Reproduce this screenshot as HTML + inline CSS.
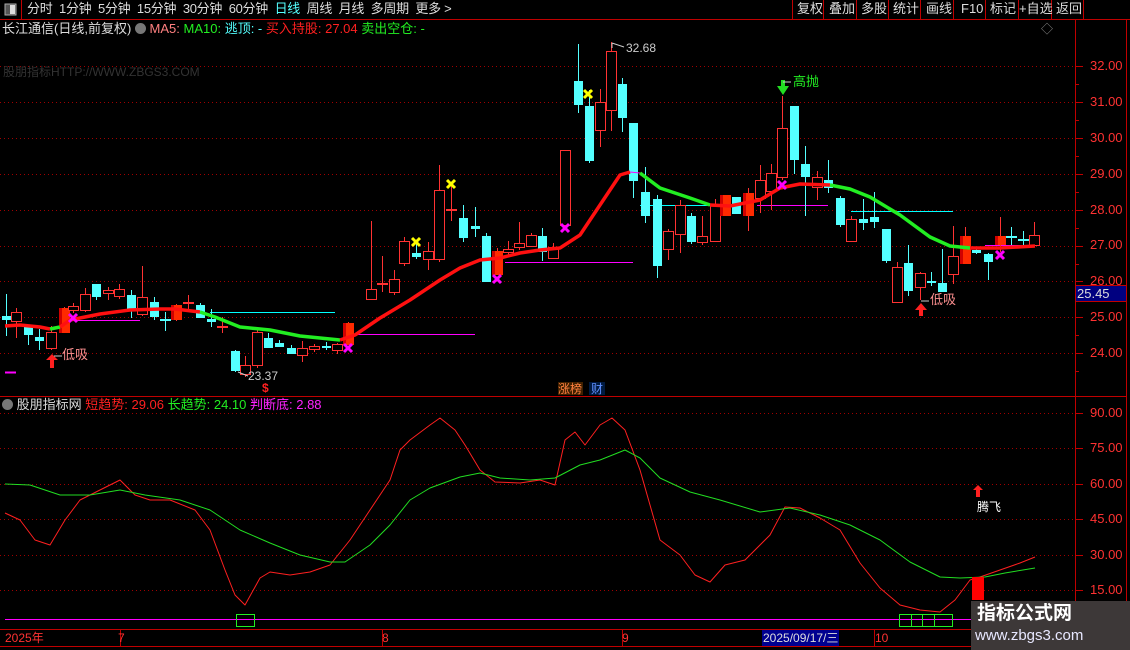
<!DOCTYPE html>
<html><head><meta charset="utf-8"><style>
html,body{margin:0;padding:0;background:#000;width:1130px;height:650px;overflow:hidden;font-family:"Liberation Sans","Noto Sans CJK SC",sans-serif}
.t{position:absolute;white-space:nowrap;font-size:12px;line-height:14px}
</style></head><body>
<svg id="s" width="1130" height="650" style="position:absolute;left:0;top:0" xmlns="http://www.w3.org/2000/svg">
<g id="grid"></g><g id="c"></g><g id="ind"></g>
</svg>
<div id="txt"></div>
<script>
var NS="http://www.w3.org/2000/svg",S=document.getElementById('s');
function el(n,a,p){var e=document.createElementNS(NS,n);for(var k in a)e.setAttribute(k,a[k]);(p||S).appendChild(e);return e}
function line(x1,y1,x2,y2,c,w,d){var a={x1:x1,y1:y1,x2:x2,y2:y2,stroke:c,'stroke-width':w||1};if(d)a['stroke-dasharray']=d;return el('line',a)}
function rect(x,y,w,h,f,s){return el('rect',{x:x,y:y,width:w,height:h,fill:f||'none',stroke:s||'none'})}
function poly(pts,c,w){return el('polyline',{points:pts.map(function(p){return p.join(',')}).join(' '),fill:'none',stroke:c,'stroke-width':w||1,'stroke-linejoin':'round'})}
var R='#c00000';
line(0,19.5,1130,19.5,R);line(21.5,0,21.5,19,R);
rect(5,4,11,11,'#555','#aaa');rect(10,5,5,9,'#ddd');
[792,823,856,888,920,953,985,1018,1051,1083].forEach(function(x){line(x+.5,0,x+.5,19,R)});
line(1075.5,20,1075.5,650,R);line(1126.5,20,1126.5,650,R);
line(0,396.5,1126,396.5,R);line(0,629.5,1126,629.5,R);line(0,646.5,1126,646.5,R);
[120,382,622,874].forEach(function(x){line(x+.5,630,x+.5,646,R)});
for(var p=24;p<=32;p++){var y=Math.round(66+(32-p)*35.9)+.5;line(0,y,1075,y,'#a00000',1,'1 3');line(1075,y,1083,y,R);line(1075,y+18,1079,y+18,R)}
[413,448,484,519,555,590].forEach(function(y){line(0,y+.5,1075,y+.5,'#a00000',1,'1 3');line(1075,y+.5,1083,y+.5,R)});
[[70,140,320,'#ff00ff'],[210,335,312,'#00ffff'],[355,475,334,'#ff00ff'],[505,633,262,'#ff00ff'],[640,713,205,'#00ffff'],[757,828,205,'#ff00ff'],[851,953,211,'#00ffff'],[985,1030,245,'#ff00ff'],[5,16,372,'#ff00ff']].forEach(function(h){line(h[0],h[2]+.5,h[1],h[2]+.5,h[3],h[3]=='#ff00ff'&&h[0]==5?2:1)});
var C=[[6,316,320,294,336,'c'],[16,312,322,308,338,'h'],[28,325,335,325,345,'c'],[39,337,341,329,350,'c'],[51,332,349,326,350,'h'],[64,308,333,307,333,'f'],[73,306,311,303,313,'h'],[85,294,311,288,312,'h'],[96,284,297,284,300,'c'],[108,290,294,287,300,'h'],[119,289,297,284,299,'h'],[131,295,310,290,318,'c'],[142,297,315,266,316,'h'],[154,302,317,297,320,'c'],[165,319,321,312,331,'cx'],[176,305,320,304,321,'f'],[188,302,304,295,311,'x'],[200,305,318,303,318,'c'],[211,319,322,309,327,'c'],[222,326,328,317,333,'x'],[235,351,371,350,372,'c'],[245,365,375,356,377,'h'],[257,332,366,330,368,'h'],[268,338,348,333,348,'c'],[279,343,347,340,347,'c'],[291,348,354,345,354,'c'],[302,348,356,341,362,'h'],[314,346,350,344,352,'h'],[326,346,348,342,350,'c'],[337,344,351,343,354,'h'],[348,323,345,322,345,'f'],
[371,289,300,221,300,'h'],[382,283,285,256,292,'h'],[394,279,293,270,295,'h'],[404,241,264,237,266,'h'],[416,253,257,242,259,'c'],[428,251,260,242,270,'h'],[439,190,260,165,262,'h'],[451,209,211,183,221,'x'],[463,218,238,205,242,'c'],[475,226,229,207,237,'c'],[486,236,282,233,282,'c'],[497,251,275,248,275,'f'],[508,249,253,241,257,'h'],[519,243,248,222,250,'h'],[531,235,247,233,247,'h'],[542,236,252,228,261,'c'],[553,247,259,243,259,'h'],[565,150,226,150,226,'h'],[578,81,105,44,113,'c'],[589,106,161,90,163,'c'],[600,102,131,89,147,'h'],[611,51,111,42,131,'h'],[622,84,118,78,132,'c'],[633,123,181,123,198,'c'],[645,192,216,167,223,'c'],[657,199,266,195,278,'c'],[668,231,250,229,260,'h'],
[680,205,235,200,253,'h'],[691,216,242,213,244,'c'],[702,236,243,216,245,'h'],[715,205,242,199,242,'h'],[725,195,216,195,216,'f'],[736,197,214,197,214,'c'],[748,193,216,188,231,'f'],[760,180,199,165,213,'h'],[771,173,192,164,210,'h'],[782,128,178,96,180,'h'],[794,106,160,106,174,'c'],[805,164,177,146,216,'c'],[817,177,188,171,200,'h'],[828,180,188,160,193,'c'],[840,198,225,196,227,'c'],[851,219,242,216,242,'h'],[863,219,223,199,230,'c'],[874,217,222,192,228,'c'],[886,229,261,229,263,'c'],[897,267,303,262,303,'h'],[908,263,291,245,296,'c'],[920,273,288,272,300,'h'],[931,281,283,272,286,'c'],[942,283,292,249,292,'c'],[953,256,275,226,284,'h'],[965,236,264,227,264,'f'],[976,250,253,248,254,'c'],[988,254,262,253,280,'c'],[1000,236,245,217,252,'f'],[1011,236,238,227,245,'cx'],[1023,239,241,231,245,'cx'],[1034,235,246,222,247,'h']];
C.forEach(function(k){var x=k[0],t=k[5];var col=(t=='c'||t=='cx')?'#54ffff':'#ff3232';
 line(x+.5,k[3],x+.5,k[4],col,1);
 if(t=='c')rect(x-4,k[1],9,Math.max(2,k[2]-k[1]),'#54ffff');
 else if(t=='cx'||t=='x')rect(x-5,k[1],11,2,col);
 else if(t=='f'){rect(x-5,k[1],11,k[2]-k[1],'#ff2a00');rect(x-5,k[1],3,k[2]-k[1],'#d00000')}
 else {rect(x-5,k[1],11,k[2]-k[1],'#000');rect(x-4.5,k[1]+.5,10,k[2]-k[1]-1,'none','#ff3232')}
});
var ma=[[5,326],[20,325],[40,327],[50,329],[60,327],[70,320],[100,314],[130,310],[160,309],[175,309],[200,312],[215,317],[240,327],[270,330],[300,336],[340,340],[355,335],[380,318],[410,300],[440,280],[460,268],[480,260],[500,258],[520,253],[540,250],[560,248],[580,235],[600,205],[620,175],[630,172],[640,173],[660,188],[690,198],[710,205],[730,206],[760,200],[780,188],[800,184],[830,185],[850,189],[870,197],[900,215],[930,237],[950,246],[970,248],[1000,248],[1035,246]];
function seg(a,b,c){poly(ma.filter(function(p){return p[0]>=a&&p[0]<=b}),c,3.5)}
seg(5,50,'#ff1010');seg(50,60,'#22ee22');seg(60,200,'#ff1010');seg(200,340,'#22ee22');seg(340,630,'#ff1010');seg(640,710,'#22ee22');seg(710,830,'#ff1010');seg(830,970,'#22ee22');seg(970,1035,'#ff1010');
poly(ma.filter(function(p){return p[0]>=630&&p[0]<=640}),'#ff00ff',1);
function X(x,y,c){line(x-4,y-4,x+4,y+4,c,3);line(x-4,y+4,x+4,y-4,c,3)}
X(73,318,'#ff00ff');X(348,348,'#ff00ff');X(497,279,'#ff00ff');X(565,228,'#ff00ff');X(782,185,'#ff00ff');X(1000,255,'#ff00ff');
X(416,242,'#ffff00');X(451,184,'#ffff00');X(588,94,'#ffff00');
el('polygon',{points:'46,360 52,354 58,360 54,360 54,368 50,368 50,360',fill:'#ff2020'});
el('polygon',{points:'915,310 921,303 927,310 923,310 923,316 919,316 919,310',fill:'#ff2020'});
el('polygon',{points:'777,86 783,95 789,86 785,86 785,80 781,80 781,86',fill:'#22dd22'});
el('polygon',{points:'973,490 978,485 983,490 980,490 980,497 976,497 976,490',fill:'#ff2020'});
line(54,356,62,356,'#ccc');line(921,301,929,301,'#ccc');line(783,82,791,82,'#ccc');
line(612,43,612,48,'#ccc');line(612,43,624,47,'#ccc');line(238,372,248,376,'#ccc');
var red=[[5,513],[20,520],[35,540],[50,545],[65,520],[80,500],[100,490],[120,480],[135,495],[150,500],[170,500],[195,510],[210,530],[225,570],[235,595],[245,605],[260,578],[270,572],[290,575],[310,572],[330,565],[350,540],[370,510],[390,480],[400,450],[410,440],[430,425],[440,418],[455,430],[465,445],[480,470],[495,482],[520,483],[540,480],[555,485],[565,440],[575,432],[585,445],[600,425],[612,418],[625,430],[640,470],[660,540],[680,555],[695,575],[710,582],[725,565],[745,560],[770,535],[785,507],[800,508],[820,518],[840,530],[860,563],[880,588],[900,605],[920,610],[940,612],[955,600],[970,580],[980,577],[1000,570],[1020,563],[1035,557]];
var grn=[[5,484],[30,485],[60,495],[90,495],[120,490],[145,495],[180,500],[210,510],[240,530],[270,543],[300,555],[330,562],[345,562],[370,545],[390,525],[410,500],[430,488],[460,477],[480,473],[500,478],[530,480],[555,478],[580,465],[600,460],[625,450],[640,458],[660,478],[690,492],[720,500],[760,512],[790,508],[820,515],[850,525],[880,540],[910,562],[940,577],[960,578],[985,577],[1005,573],[1035,568]];
poly(red,'#ff2020',1);poly(grn,'#22dd22',1);
line(5,619.5,1075,619.5,'#ff00ff',1);
rect(236.5,614.5,18,12,'none','#22ee22');
rect(899.5,614.5,53,12,'none','#22ee22');[911,922,934].forEach(function(x){line(x+.5,614,x+.5,627,'#22ee22')});
rect(972,577,12,23,'#ff0000');
rect(1076,286,50,15,'#000080');line(1076,285.5,1126,285.5,R);line(1076,301.5,1126,301.5,R);
rect(762,630,77,16,'#000090');
rect(971,601,159,49,'#3d3838');
rect(558,382,25,13,'#402000');rect(589,382,16,13,'#001a40');
</script>
<div class="t" style="left:27px;top:2px;color:#ddd;font-size:13px;letter-spacing:-0.3px">分时&nbsp;&nbsp;1分钟&nbsp;&nbsp;5分钟&nbsp;&nbsp;15分钟&nbsp;&nbsp;30分钟&nbsp;&nbsp;60分钟&nbsp;&nbsp;<span style="color:#54ffff">日线</span>&nbsp;&nbsp;周线&nbsp;&nbsp;月线&nbsp;&nbsp;多周期&nbsp;&nbsp;更多 &gt;</div>
<div class="t" style="left:797px;top:2px;color:#ddd;font-size:13px">复权</div>
<div class="t" style="left:829px;top:2px;color:#ddd;font-size:13px">叠加</div>
<div class="t" style="left:861px;top:2px;color:#ddd;font-size:13px">多股</div>
<div class="t" style="left:893px;top:2px;color:#ddd;font-size:13px">统计</div>
<div class="t" style="left:926px;top:2px;color:#ddd;font-size:13px">画线</div>
<div class="t" style="left:961px;top:2px;color:#ddd;font-size:13px">F10</div>
<div class="t" style="left:990px;top:2px;color:#ddd;font-size:13px">标记</div>
<div class="t" style="left:1019px;top:2px;color:#ddd;font-size:13px">+自选</div>
<div class="t" style="left:1056px;top:2px;color:#ddd;font-size:13px">返回</div>
<div class="t" style="left:2px;top:22px;color:#ddd;font-size:13px">长江通信(日线,前复权) <span style="display:inline-block;width:11px;height:11px;border-radius:6px;background:#777;vertical-align:-1px"></span> <span style="color:#ff8080">MA5:</span> <span style="color:#22ee22">MA10:</span> <span style="color:#54ffff">逃顶: -</span> <span style="color:#ff2020">买入持股: 27.04</span> <span style="color:#22ee22">卖出空仓: -</span></div>
<div class="t" style="left:1041px;top:22px;color:#888">◇</div>
<div class="t" style="left:3px;top:65px;color:#333">股朋指标HTTP://WWW.ZBGS3.COM</div>
<div class="t" style="left:2px;top:398px;color:#ddd;font-size:13px"><span style="display:inline-block;width:11px;height:11px;border-radius:6px;background:#777;vertical-align:-1px"></span> 股朋指标网 <span style="color:#ff2020">短趋势: 29.06</span> <span style="color:#22ee22">长趋势: 24.10</span> <span style="color:#ff22ff">判断底: 2.88</span></div>
<div class="t" style="left:62px;top:348px;color:#ff9090;font-size:13px">低吸</div>
<div class="t" style="left:930px;top:293px;color:#ff9090;font-size:13px">低吸</div>
<div class="t" style="left:793px;top:75px;color:#22ee22;font-size:13px">高抛</div>
<div class="t" style="left:626px;top:41px;color:#ccc">32.68</div>
<div class="t" style="left:248px;top:369px;color:#ccc">23.37</div>
<div class="t" style="left:262px;top:381px;color:#ff2020;font-weight:bold">$</div>
<div class="t" style="left:558px;top:382px;color:#ff8040">涨榜</div>
<div class="t" style="left:591px;top:382px;color:#6090ff">财</div>
<div class="t" style="left:977px;top:500px;color:#fff">腾飞</div>
<div class="t" style="left:1090px;top:59px;color:#ff3232;font-size:13px">32.00</div>
<div class="t" style="left:1090px;top:95px;color:#ff3232;font-size:13px">31.00</div>
<div class="t" style="left:1090px;top:131px;color:#ff3232;font-size:13px">30.00</div>
<div class="t" style="left:1090px;top:167px;color:#ff3232;font-size:13px">29.00</div>
<div class="t" style="left:1090px;top:203px;color:#ff3232;font-size:13px">28.00</div>
<div class="t" style="left:1090px;top:238px;color:#ff3232;font-size:13px">27.00</div>
<div class="t" style="left:1090px;top:274px;color:#ff3232;font-size:13px">26.00</div>
<div class="t" style="left:1077px;top:287px;color:#ddd;font-size:13px">25.45</div>
<div class="t" style="left:1090px;top:310px;color:#ff3232;font-size:13px">25.00</div>
<div class="t" style="left:1090px;top:346px;color:#ff3232;font-size:13px">24.00</div>
<div class="t" style="left:1090px;top:406px;color:#ff3232;font-size:13px">90.00</div>
<div class="t" style="left:1090px;top:441px;color:#ff3232;font-size:13px">75.00</div>
<div class="t" style="left:1090px;top:477px;color:#ff3232;font-size:13px">60.00</div>
<div class="t" style="left:1090px;top:512px;color:#ff3232;font-size:13px">45.00</div>
<div class="t" style="left:1090px;top:548px;color:#ff3232;font-size:13px">30.00</div>
<div class="t" style="left:1090px;top:583px;color:#ff3232;font-size:13px">15.00</div>
<div class="t" style="left:5px;top:631px;color:#ff3232">2025年</div>
<div class="t" style="left:118px;top:631px;color:#ff3232">7</div>
<div class="t" style="left:382px;top:631px;color:#ff3232">8</div>
<div class="t" style="left:622px;top:631px;color:#ff3232">9</div>
<div class="t" style="left:763px;top:631px;color:#ddd">2025/09/17/三</div>
<div class="t" style="left:875px;top:631px;color:#ff3232">10</div>
<div class="t" style="left:977px;top:603px;color:#fff;font-size:19px;line-height:22px;font-weight:bold">指标公式网</div>
<div class="t" style="left:975px;top:627px;color:#e8e8ff;font-size:15px;line-height:18px">www.zbgs3.com</div>
</body></html>
